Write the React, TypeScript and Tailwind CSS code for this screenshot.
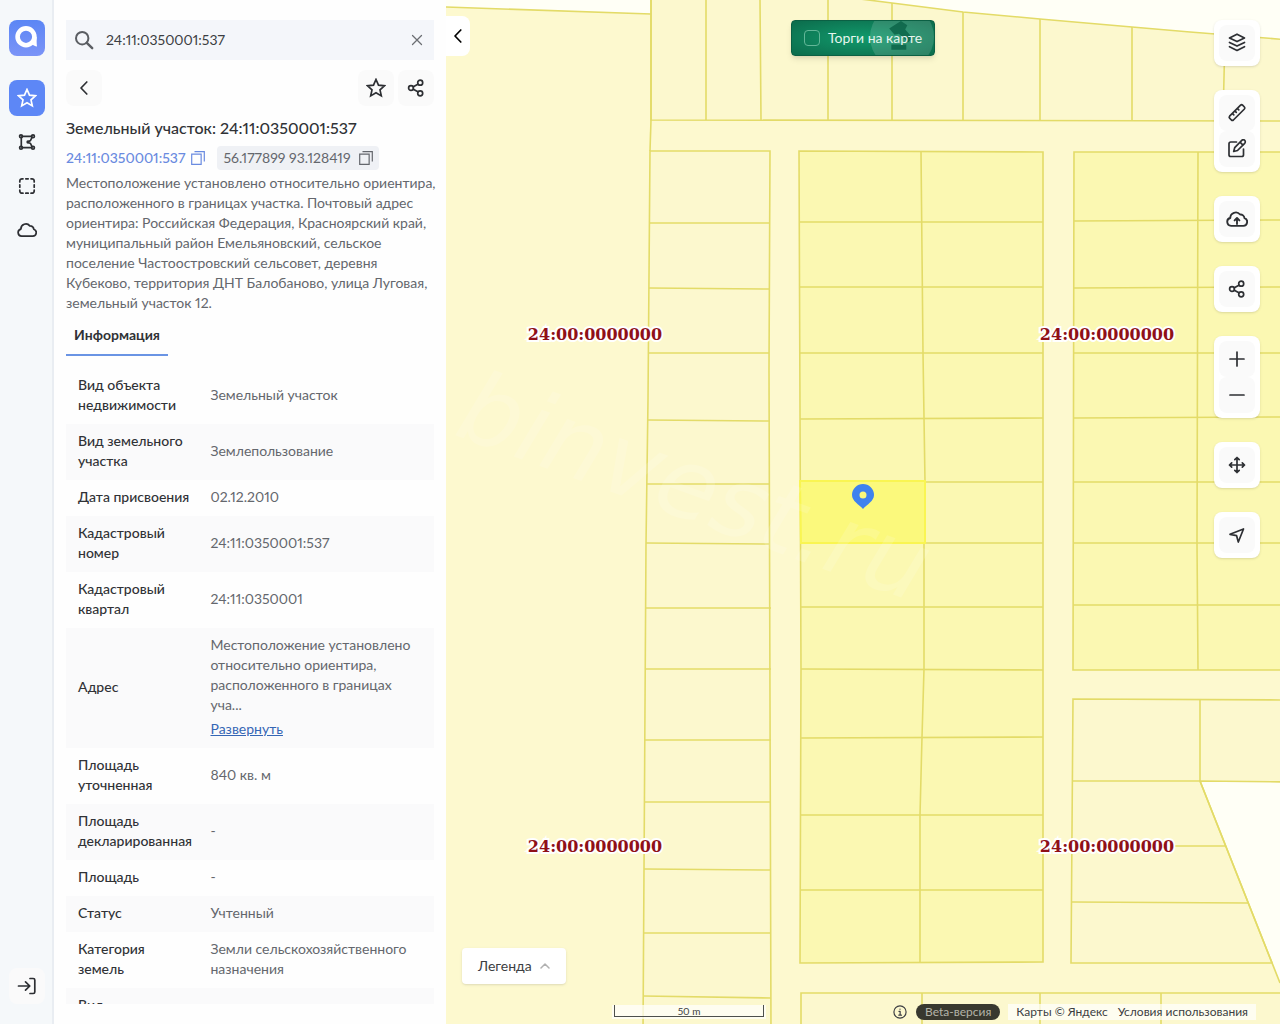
import React, { useState } from 'react';
import clsx from 'clsx';

const ADDRESS =
  'Местоположение установлено относительно ориентира, расположенного в границах участка. Почтовый адрес ориентира: Российская Федерация, Красноярский край, муниципальный район Емельяновский, сельское поселение Частоостровский сельсовет, деревня Кубеково, территория ДНТ Балобаново, улица Луговая, земельный участок 12.';

const ADDRESS_LIMIT = 80;

interface InfoRow {
  label: string;
  value: string;
}

const ROWS: InfoRow[] = [
  { label: 'Вид объекта недвижимости', value: 'Земельный участок' },
  { label: 'Вид земельного участка', value: 'Землепользование' },
  { label: 'Дата присвоения', value: '02.12.2010' },
  { label: 'Кадастровый номер', value: '24:11:0350001:537' },
  { label: 'Кадастровый квартал', value: '24:11:0350001' },
  { label: 'Адрес', value: ADDRESS },
  { label: 'Площадь уточненная', value: '840 кв. м' },
  { label: 'Площадь декларированная', value: '-' },
  { label: 'Площадь', value: '-' },
  { label: 'Статус', value: 'Учтенный' },
  { label: 'Категория земель', value: 'Земли сельскохозяйственного назначения' },
  { label: 'Вид разрешенного использования', value: '-' },
];

const Icon = ({ children, size = 20, className }: { children: React.ReactNode; size?: number; className?: string }) => (
  <svg
    width={size}
    height={size}
    viewBox="0 0 20 20"
    fill="none"
    stroke="currentColor"
    strokeWidth="1.7"
    strokeLinecap="round"
    strokeLinejoin="round"
    className={clsx('shrink-0', className)}
    aria-hidden="true"
  >
    {children}
  </svg>
);

const StarIcon = () => (
  <Icon>
    <path d="M10 1.5l2.5 5.7 6 .6-4.5 4.1 1.3 6-5.3-3.1-5.3 3.1 1.3-6-4.5-4.1 6-.6z" strokeLinejoin="miter" />
  </Icon>
);

const ShareIcon = () => (
  <Icon>
    <circle cx="5" cy="10" r="2.4" />
    <circle cx="14.2" cy="4.7" r="2.5" />
    <circle cx="14.2" cy="15.3" r="2.5" />
    <path d="M7.3 8.8l4.6-2.6M7.3 11.2l4.6 2.6" />
  </Icon>
);

const CloudPath = () => (
  <path d="M4.6 16.2h11.2a3.6 3.6 0 0 0 1-7 3.7 3.7 0 0 0-4-3.3 5 5 0 0 0-8.9 3.2 3.6 3.6 0 0 0 .7 7.1z" />
);

const ChevronLeftIcon = () => (
  <Icon>
    <path d="M12.8 4L7 10l5.8 6" />
  </Icon>
);

const CopyIcon = () => (
  <Icon size={14}>
    <path d="M1 4.5h13.5V19H1zM5 1h14v14" strokeLinejoin="miter" strokeLinecap="butt" />
  </Icon>
);

const Logo = () => (
  <a href="#" aria-label="Главная" className="flex size-9 rounded-lg bg-gradient-to-b from-[#5b86f5] to-[#7b94f7]">
    <svg viewBox="0 0 36 36" className="size-9" fill="none" stroke="#fff" aria-hidden="true">
      <circle cx="17" cy="16.8" r="8.4" strokeWidth="4.6" />
      <path d="M20 23c3 1 4 2.800 8 3.600-.5-3-.3-6-.3-9.800l-3 1z" fill="#fff" stroke="none" />
    </svg>
  </a>
);

const NAV = [
  { label: 'Избранное', active: true, icon: <StarIcon /> },
  {
    label: 'Нарисовать участок',
    active: false,
    icon: (
      <Icon>
        <path d="M5.3 4.3h9.4M4.3 5.3v9.4M5.3 15.7h9.4M15 5.3l-1.5 3.2-2.5 1.5 2.5 1.5 1.5 3.2" />
        <circle cx="4" cy="4.2" r="1.4" />
        <circle cx="16" cy="4.2" r="1.4" />
        <circle cx="4" cy="15.8" r="1.4" />
        <circle cx="16" cy="15.8" r="1.4" />
        <circle cx="11" cy="10" r=".8" />
      </Icon>
    ),
  },
  {
    label: 'Выделить область',
    active: false,
    icon: (
      <Icon>
        <path d="M2.8 6V5a2.2 2.2 0 0 1 2.2-2.2h1M14 2.8h1A2.2 2.2 0 0 1 17.2 5v1M17.2 14v1a2.2 2.2 0 0 1-2.2 2.2h-1M6 17.2H5A2.2 2.2 0 0 1 2.8 15v-1M8.8 2.8h2.4M8.8 17.2h2.4M2.8 8.8v2.4M17.2 8.8v2.4" />
      </Icon>
    ),
  },
  {
    label: 'Облако',
    active: false,
    icon: (
      <Icon>
        <CloudPath />
      </Icon>
    ),
  },
];

const Sidebar = () => (
  <nav className="flex w-[54px] shrink-0 flex-col items-center bg-[#f5f8fa] pt-5 pb-5 shadow-[inset_-2px_0_0_#e9edf2]">
    <Logo />
    <div className="mt-6 flex flex-col gap-2">
      {NAV.map((item) => (
        <button
          key={item.label}
          type="button"
          aria-label={item.label}
          className={clsx(
            'flex size-9 items-center justify-center rounded-lg',
            item.active ? 'bg-[#5d87f6] text-white' : 'text-[#2d2f33]'
          )}
        >
          {item.icon}
        </button>
      ))}
    </div>
    <button
      type="button"
      aria-label="Войти"
      className="mt-auto flex size-9 items-center justify-center rounded-lg bg-[#fafafa] text-[#2d2f33]"
    >
      <Icon>
        <path d="M1.5 10h11M8.5 5.8l4.3 4.2-4.3 4.2M13 2.5h3.2a1.6 1.6 0 0 1 1.6 1.6v11.8a1.6 1.6 0 0 1-1.6 1.6H13" />
      </Icon>
    </button>
  </nav>
);

const SquareButton = ({ label, children }: { label: string; children: React.ReactNode }) => (
  <button
    type="button"
    aria-label={label}
    className="flex size-9 items-center justify-center rounded-lg bg-[#fafafa] text-[#2d2f33]"
  >
    {children}
  </button>
);

const InfoTable = () => {
  const [expanded, setExpanded] = useState(false);

  return (
    <table className="w-full table-fixed text-left">
      <tbody>
        {ROWS.map(({ label, value }) => {
          const isLong = value.length > ADDRESS_LIMIT;
          return (
            <tr key={label} className="even:bg-[#fafafb]">
              <th scope="row" className="w-[36%] pt-[7px] pr-2 pb-[9px] pl-3 font-medium text-[#303236]">
                {label}
              </th>
              <td className="px-3 pt-[7px] pb-[9px] text-[#64676d]">
                {isLong && !expanded ? `${value.slice(0, ADDRESS_LIMIT)}...` : value}
                {isLong && (
                  <button
                    type="button"
                    onClick={() => setExpanded(!expanded)}
                    className="mt-1 block text-[#3566b5] underline"
                  >
                    {expanded ? 'Свернуть' : 'Развернуть'}
                  </button>
                )}
              </td>
            </tr>
          );
        })}
      </tbody>
    </table>
  );
};

const ObjectPanel = () => {
  const [query, setQuery] = useState('24:11:0350001:537');

  return (
    <section className="flex w-[392px] shrink-0 flex-col bg-[#fefefe] px-3 py-5">
      <div className="flex h-10 shrink-0 items-center gap-3 bg-[#f4f6fa] px-2">
        <Icon className="text-[#5b5e63]">
          <circle cx="8.2" cy="8.2" r="6.2" strokeWidth="2" />
          <path d="M12.8 12.8l5.4 5.4" strokeWidth="2.4" />
        </Icon>
        <input
          type="text"
          aria-label="Поиск"
          value={query}
          onChange={(e) => setQuery(e.target.value)}
          className="min-w-0 flex-1 bg-transparent text-[#3c3e42] proportional-nums outline-none"
        />
        <button type="button" aria-label="Очистить" onClick={() => setQuery('')} className="text-[#6b6e73]">
          <Icon size={18}>
            <path d="M5 5l10 10M15 5L5 15" strokeWidth="1.4" />
          </Icon>
        </button>
      </div>

      <div className="mt-[10px] flex shrink-0 gap-1">
        <SquareButton label="Назад">
          <ChevronLeftIcon />
        </SquareButton>
        <div className="flex-1" />
        <SquareButton label="В избранное">
          <StarIcon />
        </SquareButton>
        <SquareButton label="Поделиться">
          <ShareIcon />
        </SquareButton>
      </div>

      <h1 className="mt-[10px] text-base leading-6 font-medium text-[#303236]">Земельный участок: 24:11:0350001:537</h1>

      <div className="mt-[6px] flex h-6 shrink-0 items-center gap-3">
        <button type="button" className="flex items-center gap-[6px] font-medium text-[#6a8be0]">
          24:11:0350001:537
          <CopyIcon />
        </button>
        <button type="button" className="flex h-6 items-center gap-2 rounded-sm bg-[#eff1f5] px-[6px] text-[#64676d]">
          56.177899 93.128419
          <CopyIcon />
        </button>
      </div>

      <p className="mt-[3px] -mr-2 text-[#64676d]">{ADDRESS}</p>

      <div role="tablist" className="mt-[3px] flex shrink-0">
        <button
          type="button"
          role="tab"
          aria-selected="true"
          className="h-10 border-b-2 border-[#6a94e4] px-2 font-bold text-[#303236]"
        >
          Информация
        </button>
      </div>

      <div className="mt-3 min-h-0 flex-1 overflow-y-auto [scrollbar-width:none]">
        <InfoTable />
      </div>
    </section>
  );
};

/* Parcel borders, in map units */
const PALE_PARCELS = [
  'M651 -9H800L868 0 892 3 963 12 1040 19 1132 27 1190 32 1290 40V121L651 120z',
  'M650 151H770L769 370 771 1034H643L646 544 648 400z',
  'M1073 699L1290 700V782L1200 781 1272 963H1071z',
  'M801 1034V993H1290V1034z',
];

const BRIGHT_PARCELS = [
  'M799 151L1043 152V962L800 963 801 669z',
  'M1074 152H1290V670H1073z',
];

const LINES = [
  'M446 7L651 14M651 0V120',
  'M706 0V120M760 0L761 120M828 0V120M892 3V120M963 12V120M1040 19V120M1132 27V120M1225 35L1223 120',
  'M650 151L651 120',
  'M650 223H770M649 288L770 289M648 353H769M648 420L770 421M647 484H770M646 543L770 544M645 608H771M645 669H771M644 740H771M644 802H771M644 869L771 870M643 933H771M643 996L771 998',
  'M921 152L923 353 925 482 924 543V669L922 737 920 815V963',
  'M799 222H1043M799 287H1043M799 353H1043M800 419L1043 418M800 482H1043M800 543H1043M801 607H1043M801 669L1043 670M801 738L1043 737M801 815H1043M801 890H1043',
  'M1198 152L1197 543 1198 670',
  'M1074 221L1280 220M1074 288L1280 287M1074 353H1280M1074 418L1280 417M1074 482H1280M1073 543H1280M1073 605H1280',
  'M1200 699V781M1073 781H1200M1072 846H1225M1072 902L1248 903M1200 781L1280 983',
  'M922 993V1024M1040 993V1024M1161 993V1024',
];

const QUARTERS = [
  { x: 595, y: 340 },
  { x: 1107, y: 340 },
  { x: 595, y: 852 },
  { x: 1107, y: 852 },
];

const CadastreMap = () => (
  <svg
    viewBox="446 0 834 1024"
    preserveAspectRatio="xMidYMid slice"
    className="absolute inset-0 size-full"
    role="img"
    aria-label="Кадастровая карта"
  >
    <path d="M446 0H1280V1024H446z" fill="#fffff6" />
    <path d="M446 7L651 14V0H868L963 12 1132 27 1280 39V782L1200 781 1280 983V1024H446z" fill="#fdf9cf" />
    <g stroke="#e3db68" strokeWidth="1.6" fill="none">
      {PALE_PARCELS.map((d) => (
        <path key={d} d={d} fill="#fcf8ce" />
      ))}
      {BRIGHT_PARCELS.map((d) => (
        <path key={d} d={d} fill="#fbf8b2" />
      ))}
      {LINES.map((d) => (
        <path key={d} d={d} />
      ))}
    </g>
    <path d="M800 481H925V543H801z" fill="#fbf97c" stroke="#f9f552" strokeWidth="2" />
    <text
      transform="translate(452 434) rotate(20)"
      fontSize="98"
      fontStyle="italic"
      fill="#fff"
      fillOpacity="0.14"
      className="font-['DejaVu_Sans',sans-serif]"
    >
      binvest.ru
    </text>
    <g
      fontSize="16"
      fontWeight="700"
      textAnchor="middle"
      fill="#8f1018"
      stroke="#fff"
      strokeWidth="4"
      paintOrder="stroke"
      className="font-['DejaVu_Serif',serif]"
    >
      {QUARTERS.map(({ x, y }) => (
        <text key={`${x}-${y}`} x={x} y={y}>
          24:00:0000000
        </text>
      ))}
    </g>
    <path
      d="M863 484a11 11 0 0 0-11 11c0 6 7 9.500 11 14 4-4.500 11-8 11-14a11 11 0 0 0-11-11zm0 7.500a3.500 3.500 0 1 1 0 7 3.500 3.500 0 0 1 0-7z"
      fill="#3f82ee"
      fillRule="evenodd"
    />
  </svg>
);

const TOOL_GROUPS = [
  [
    {
      label: 'Слои',
      icon: (
        <Icon>
          <path d="M10 1.200l7.500 3.700L10 8.600 2.500 4.900zM2.500 9.400L10 13.100 17.500 9.400M2.500 13.700L10 17.400l7.500-3.700" />
        </Icon>
      ),
    },
  ],
  [
    {
      label: 'Линейка',
      icon: (
        <Icon>
          <path d="M2.600 13.200L13.600 2.200a1.500 1.500 0 0 1 2 0l1.800 1.800a1.500 1.500 0 0 1 0 2l-11 11a1.500 1.500 0 0 1-2 0l-1.800-1.800a1.500 1.500 0 0 1 0-2zM5.500 10.600l1.300 1.300M8 8.100l1.300 1.300M10.500 5.600l1.300 1.300" />
        </Icon>
      ),
    },
    {
      label: 'Редактировать',
      icon: (
        <Icon>
          <path d="M9.500 3H3.800A1.800 1.800 0 0 0 2 4.800v10.900a1.800 1.800 0 0 0 1.800 1.800h10.900a1.800 1.800 0 0 0 1.800-1.800V10" />
          <path d="M14.800 1.400a1.900 1.900 0 0 1 2.900 2.900l-7.200 7.200-3.800 1 1-3.800zM13.200 3.300l2.800 2.800" />
        </Icon>
      ),
    },
  ],
  [
    {
      label: 'Загрузить',
      icon: (
        <Icon size={22}>
          <CloudPath />
          <path d="M10 14.500V9.200M7.800 11.300L10 9.100l2.200 2.200" />
        </Icon>
      ),
    },
  ],
  [{ label: 'Поделиться картой', icon: <ShareIcon /> }],
  [
    {
      label: 'Приблизить',
      icon: (
        <Icon>
          <path d="M3 10h14M10 3v14" />
        </Icon>
      ),
    },
    {
      label: 'Отдалить',
      icon: (
        <Icon>
          <path d="M3 10h14" />
        </Icon>
      ),
    },
  ],
  [
    {
      label: 'Переместить',
      icon: (
        <Icon>
          <path d="M2.500 10h15M10 2.500v15M7.800 4.700L10 2.500l2.200 2.200M7.800 15.300l2.200 2.200 2.200-2.200M4.700 7.800L2.500 10l2.200 2.200M15.300 7.800l2.200 2.200-2.200 2.200" />
        </Icon>
      ),
    },
  ],
  [
    {
      label: 'Моё местоположение',
      icon: (
        <Icon>
          <path d="M3 9.300L16.500 4 11.300 17l-1.700-6.300z" />
        </Icon>
      ),
    },
  ],
];

const MapTools = () => (
  <div className="absolute top-5 right-5 flex flex-col gap-6">
    {TOOL_GROUPS.map((group) => (
      <div key={group[0].label} className="flex flex-col rounded-lg bg-white p-[5px] shadow-sm">
        {group.map((tool) => (
          <SquareButton key={tool.label} label={tool.label}>
            {tool.icon}
          </SquareButton>
        ))}
      </div>
    ))}
  </div>
);

const AuctionToggle = () => {
  const [checked, setChecked] = useState(false);

  return (
    <div className="absolute inset-x-0 top-5 flex justify-center">
      <label className="relative flex h-9 cursor-pointer items-center gap-2 overflow-hidden rounded-sm border border-[#0b6044] bg-radial from-[#119a6c] to-[#0c6c4c] px-3 text-[#e6f5ee] shadow-md">
        <svg viewBox="0 0 60 60" className="absolute -top-4 right-0 size-16" aria-hidden="true">
          <circle cx="30" cy="30" r="30" fill="#fff" fillOpacity="0.14" />
          <path d="M18 22l11-7 6 4-2 4 7 8-4 4-9-8-4 1zM20 37h14v5H20z" fill="#0a6246" fillOpacity="0.8" />
        </svg>
        <input
          type="checkbox"
          checked={checked}
          onChange={(e) => setChecked(e.target.checked)}
          className="relative size-4 appearance-none rounded-sm border border-[#63b798] checked:bg-[#63b798]"
        />
        <span className="relative">Торги на карте</span>
      </label>
    </div>
  );
};

const MapFooter = () => (
  <div className="absolute right-6 bottom-1 flex h-4 items-center text-xs text-[#3c3e42]">
    <div className="mr-[127px] flex h-[14px] w-[154px] justify-center bg-white/70 px-[2px]">
      <div className="h-3 w-full border-x border-b border-[#4d4f4c] text-center text-[10px] leading-3">50 m</div>
    </div>
    <Icon size={14} className="mr-[9px]">
      <circle cx="10" cy="10" r="8.7" />
      <path d="M8.5 9h1.7v5.5M8.3 14.5h3.8M10 5.7v.2" />
    </Icon>
    <span className="mr-2 rounded-full bg-[#38382f] px-[9px] leading-4 text-[#b4b4a8]">Beta-версия</span>
    <div className="flex gap-[10px] bg-white/70 px-2 leading-4">
      <a href="#">Карты © Яндекс</a>
      <a href="#">Условия использования</a>
    </div>
  </div>
);

const App = () => (
  <div className="flex h-screen overflow-hidden font-['Lato','Noto_Sans',sans-serif] text-sm leading-5 proportional-nums">
    <Sidebar />
    <ObjectPanel />
    <main className="relative min-w-0 flex-1 overflow-hidden">
      <CadastreMap />
      <button
        type="button"
        aria-label="Свернуть панель"
        className="absolute top-4 left-0 flex h-10 w-6 items-center justify-center rounded-r-lg bg-white text-black"
      >
        <ChevronLeftIcon />
      </button>
      <AuctionToggle />
      <MapTools />
      <button
        type="button"
        className="absolute bottom-10 left-4 flex h-9 items-center gap-2 rounded-sm bg-white px-4 text-[#3c3e42] shadow-sm"
      >
        Легенда
        <Icon size={10} className="text-[#b0b0b0]">
          <path d="M2 14l8-8 8 8" strokeWidth="3" />
        </Icon>
      </button>
      <MapFooter />
    </main>
  </div>
);

export default App;
